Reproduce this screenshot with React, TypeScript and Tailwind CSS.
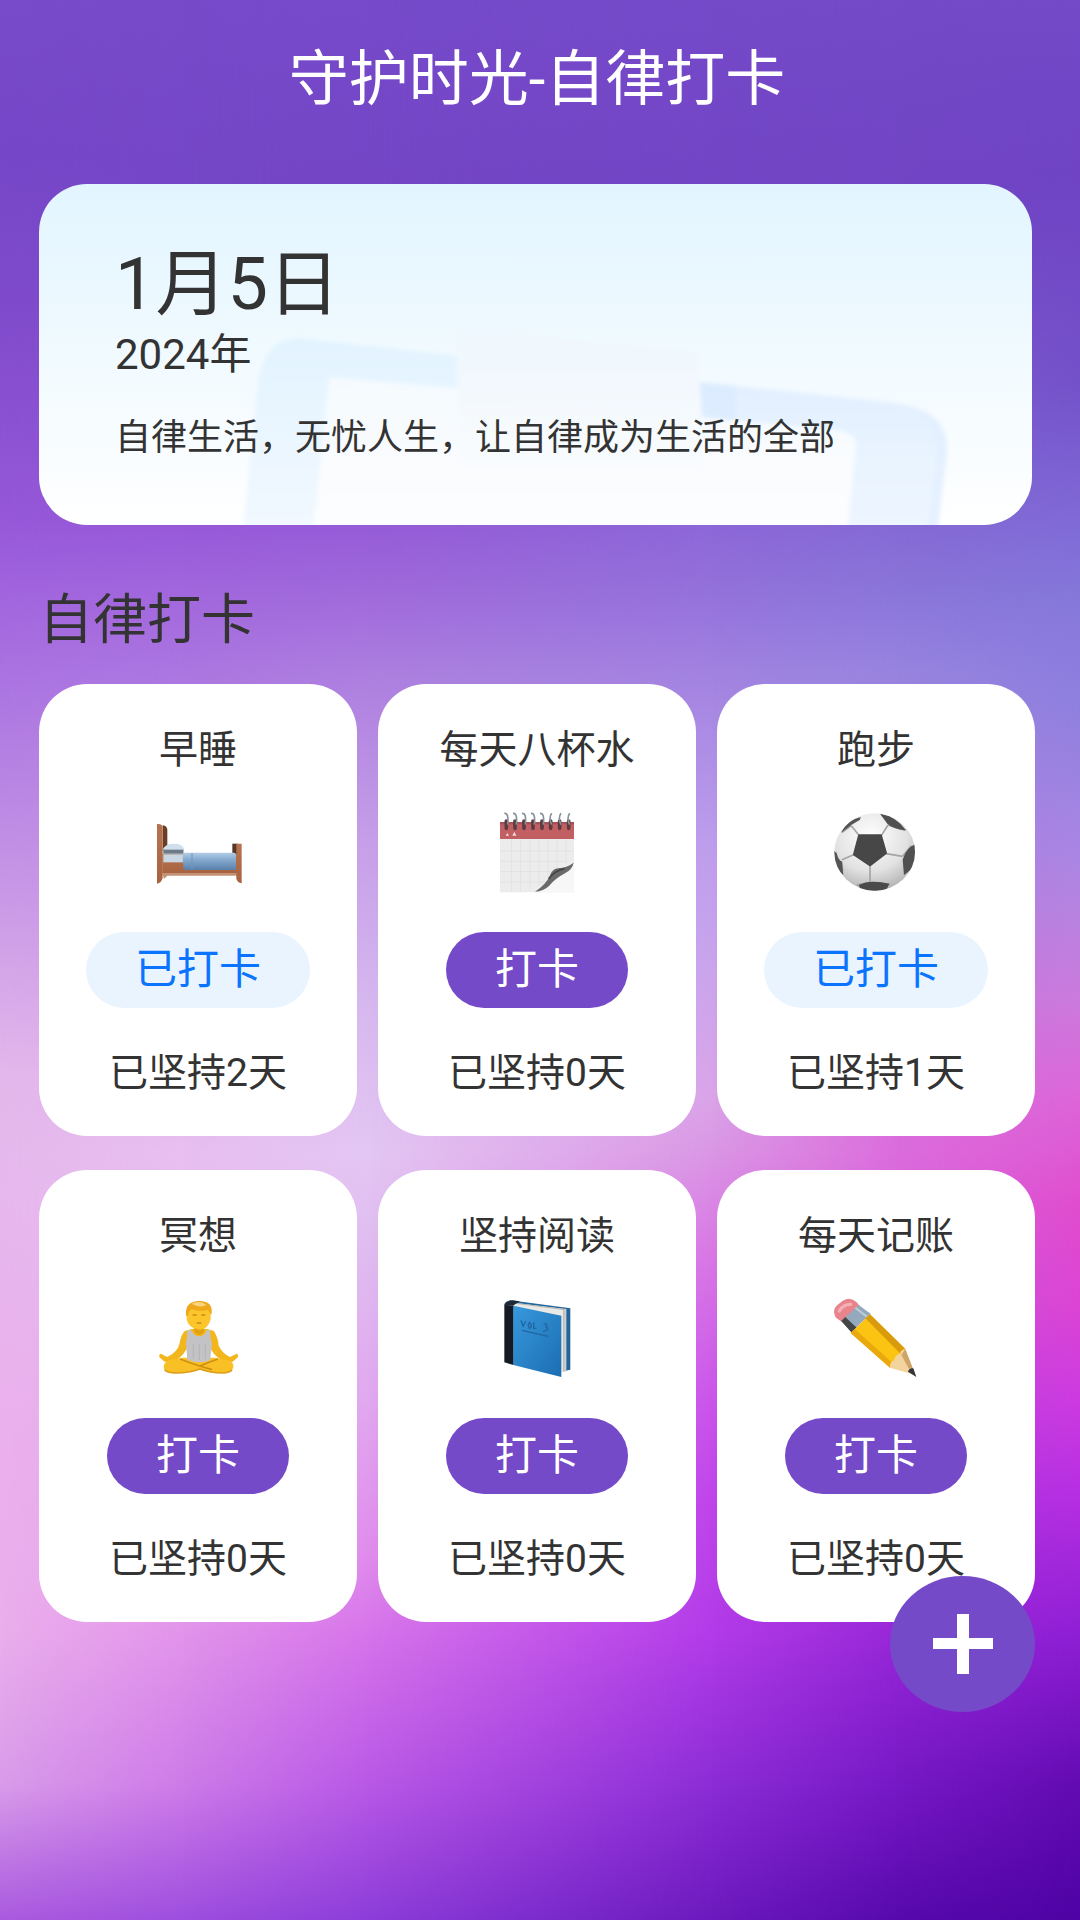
import { ReactNode, useState } from "react";
import clsx from "clsx";

// Each layer fades in over the one before it, left to right
const backdropLayers = [
  "bg-[linear-gradient(to_bottom,#784bca_0%,#7647c8_8%,#7f4bcc_16%,#9658d9_27%,#a265de_31%,#aa72e1_35%,#c290e5_44%,#d3a4e8_50%,#e4b8ec_56%,#e7b8ee_62%,#eab0ed_75%,#ebaeec_85%,#d99be9_93%,#aa5adf_100%)]",
  "bg-[linear-gradient(to_bottom,#774aca_0%,#7547c7_10%,#8a50d0_20%,#9658d8_27%,#a267dd_31%,#ab76e0_35%,#e7bfef_60%,#e6a0ec_82%,#e194ea_85%,#cd7ae8_93%,#9d4ede_100%)] [mask-image:linear-gradient(to_right,transparent_0%,black_17%)]",
  "bg-[linear-gradient(to_bottom,#764aca_0%,#7446c6_10%,#8950d0_20%,#955ad7_27%,#a06adb_31%,#ac7edf_35%,#c79fe8_44%,#d5b7ee_52%,#e4c6f3_60%,#dfbcf0_65%,#e0a8ee_73%,#e08cec_81%,#d674ea_85%,#b858e6_93%,#8c3dd9_100%)] [mask-image:linear-gradient(to_right,transparent_17%,black_34%)]",
  "bg-[linear-gradient(to_bottom,#754ac9_0%,#7245c5_10%,#7f50cc_20%,#8b66d7_27%,#9472db_31%,#a182e0_35%,#bd9dec_44%,#c8a4ec_50%,#d9a4e8_57%,#da96e4_60%,#d878e4_65%,#ca54ea_73%,#bf44ea_78%,#b23be8_85%,#8b2cd6_93%,#6b19be_100%)] [mask-image:linear-gradient(to_right,transparent_34%,black_66%)]",
  "bg-[linear-gradient(to_bottom,#744ac8_0%,#7144c4_10%,#8468d4_27%,#8a76da_31%,#9784df_35%,#dc6cdc_60%,#9c29da_84%,#7618c5_93%,#5709ad_100%)] [mask-image:linear-gradient(to_right,transparent_66%,black_83%)]",
  "bg-[linear-gradient(to_bottom,#744ac8_0%,#6f43c4_9%,#7452ca_20%,#7f6ad6_27%,#8577da_31%,#9080de_37%,#a886e4_44%,#b484e0_47%,#cb7adc_52%,#dc66d8_57%,#e04cce_63%,#db44d4_68%,#cc3ae0_73%,#b52ee2_78%,#8f1fd4_85%,#620bb2_93%,#4e02a4_100%)] [mask-image:linear-gradient(to_right,transparent_83%,black_100%)]",
];

const BedIcon = () => (
  <svg viewBox="52 50 300 276" className="h-[92px] w-[100px]" aria-hidden="true">
    <defs>
      <linearGradient id="wood" x1="0" x2="0" y1="0" y2="1">
        <stop offset="0" stopColor="#b57450" />
        <stop offset="1" stopColor="#a8623f" />
      </linearGradient>
      <linearGradient id="blanket" x1="0" x2="0" y1="0" y2="1">
        <stop offset="0" stopColor="#b3cde6" />
        <stop offset="0.4" stopColor="#86aacf" />
        <stop offset="1" stopColor="#5880ab" />
      </linearGradient>
    </defs>
    <path d="M96 105q14 2 14 14v62H96z" fill="#6b3d27" />
    <path d="M305 160h16v40h-16z" fill="#573627" />
    <path d="M95 190h225v58H95z" fill="url(#wood)" />
    <path d="M95 248h225v8H110l-10 10z" fill="#c39276" />
    <path d="M98 192h62v24H98z" fill="#c9d7e3" />
    <path d="M98 174q8-14 30-14 28 0 32 16v14H98z" fill="#cfdfeb" />
    <path d="M98 178h60v12H98z" fill="#6c7b87" />
    <path d="M157 187h152q7 0 7 8v44H160q-5-20-3-52z" fill="url(#blanket)" />
    <path d="M184 188v50" stroke="#6f95bd" strokeWidth="3" />
    <path d="M79 101q14-2 17 8v154q-4 15-17 17z" fill="url(#wood)" />
    <path d="M317 160h16v119q-14-1-16-15z" fill="url(#wood)" />
  </svg>
);

const CalendarIcon = () => (
  <svg viewBox="52 50 300 276" className="h-[92px] w-[100px]" aria-hidden="true">
    <path d="M91 140h222v166H91z" fill="#ececec" />
    <path
      d="M91 182h222M91 213h200M91 244h170M91 275h140M126 146v158M153 146v158M181 146v150M208 146v140M235 146v120M262 146v90M289 146v75"
      stroke="#e2e2e2"
      strokeWidth="3"
    />
    <path d="M196 306q35-24 48-52 24-22 69-34v86z" fill="#f7f7f7" />
    <path d="M196 304q32-20 44-46 8-24 26-24 28-3 46-17-4 20-26 32-30 16-48 38-16 16-42 17z" fill="#6a6a6a" />
    <path d="M237 265q20-25 48-30" stroke="#444" strokeWidth="5" fill="none" />
    <path d="M91 95h222v51H91z" fill="#c25f63" />
    <path d="M91 95h222v7H91z" fill="#a84f54" />
    <path d="M108 136l5-8 5 8zM128 136l6-12 6 12z" fill="#f4dcdc" />
    <path
      d="M110 92v22M136 92v22M163 92v22M190 92v22M217 92v22M243 92v22M270 92v22M297 92v22"
      stroke="#5a3c40"
      strokeWidth="11"
      strokeLinecap="round"
    />
    <path
      d="M104 69q14-2 10 34M130 69q14-2 10 34M157 69q14-2 10 34M184 69q14-2 10 34M211 69q14-2 10 34M246 69q-10 14 0 34M274 69q-10 14 0 34M300 69q-10 14 0 34"
      stroke="#87939b"
      strokeWidth="5"
      fill="none"
    />
  </svg>
);

const BallIcon = () => (
  <svg viewBox="52 50 300 276" className="h-[92px] w-[100px]" aria-hidden="true">
    <defs>
      <radialGradient id="ball" cx="0.45" cy="0.3" r="0.75">
        <stop offset="0" stopColor="#ffffff" />
        <stop offset="0.6" stopColor="#e2e2e2" />
        <stop offset="1" stopColor="#adadad" />
      </radialGradient>
      <clipPath id="ballClip">
        <ellipse cx="198" cy="185" rx="121" ry="116" />
      </clipPath>
    </defs>
    <ellipse cx="198" cy="185" rx="121" ry="116" fill="url(#ball)" />
    <g clipPath="url(#ballClip)">
      <path
        d="M152 136l-24-30M218 136l20-32M232 190l50 8M184 226v52M138 192l-38 16M128 106l-28 20M238 104l52 16M282 198l26-32M184 276l-40 8M184 276l60 6M98 212l4 30"
        stroke="#a5a5a5"
        strokeWidth="5"
        fill="none"
      />
      <path
        d="M152 136h64l15 52-47 36-47-32z"
        fill="#474747"
        stroke="#474747"
        strokeWidth="8"
        strokeLinejoin="round"
      />
      <path d="M98 126q20-38 58-46l-2 8q-28 14-54 38z" fill="#555" />
      <path d="M214 70q50 8 78 50-40-4-56-20z" fill="#505050" />
      <path d="M325 160l-17 8q-18 14-26 40l4 46 39-30z" fill="#505050" />
      <path d="M150 284q34-18 92-4l-12 26h-70z" fill="#4a4a4a" />
      <path d="M76 182l8 6q6 24 16 26l4 40q-26-20-30-60z" fill="#555" />
    </g>
  </svg>
);

const MeditateIcon = () => (
  <svg viewBox="54 38 300 276" className="h-[92px] w-[100px]" aria-hidden="true">
    <path
      d="M164 152q20-8 44-8t44 8q12 20 14 44 12 24 34 34l20-10q8 4 2 12l-14 12-24 2q-40-24-48-56h-60q-8 32-46 56l-26-2-14-12q-6-8 2-12l20 10q30-14 36-38 4-26 16-40z"
      fill="#f3b61c"
    />
    <path d="M104 268q-10-18 14-28l40-8h96l40 8q26 10 12 30-6 8-30 8-36 0-68-12-34 12-74 12-24 0-30-10z" fill="#f9c025" />
    <path d="M150 236q40 16 96 32M264 236q-30 10-56 22" stroke="#cf8f10" strokeWidth="5" fill="none" />
    <path d="M104 268q6 10 34 10 40 0 72-12 32 12 66 12 24 0 30-10" stroke="#dc9d17" strokeWidth="5" fill="none" />
    <path d="M172 150h12q8 18 24 18t22-18h10q2 30 6 40-2 22-6 50-32 12-68-2-2-24-4-48 4-18 4-40z" fill="#c3c3c6" />
    <path d="M190 190v46M208 190v50M226 190v46" stroke="#b7b7bb" strokeWidth="4" />
    <path d="M192 136h30v18q-14 20-30 0z" fill="#e2a214" />
    <path d="M170 98q2-34 38-34 34 0 34 34v18q-6 30-34 32-34-4-38-32z" fill="#fbc52b" />
    <path d="M168 106q-4-44 40-44t36 42q-6-10-10-16-24 8-50-2-8 6-10 20z" fill="#eea81a" />
    <path d="M184 70q26-12 46 4-22 10-46-4z" fill="#f8d47f" />
    <path d="M188 104h12M214 104h12M200 128h14" stroke="#c88c14" strokeWidth="4" />
  </svg>
);

const BookIcon = () => (
  <svg viewBox="52 38 300 276" className="h-[92px] w-[100px]" aria-hidden="true">
    <defs>
      <linearGradient id="cover" x1="0" x2="1" y1="0" y2="1">
        <stop offset="0" stopColor="#3799dc" />
        <stop offset="1" stopColor="#1c6db2" />
      </linearGradient>
    </defs>
    <path d="M104 72q4-10 18-12l180 24v184l-30 6z" fill="#22669d" />
    <path d="M120 66l170 20v184l-18 8-150-30z" fill="#e9e9e7" />
    <path d="M130 68l156 20v186M282 90v184" stroke="#b4b4b1" strokeWidth="3" fill="none" />
    <path d="M104 74l28 2v178l-28-8z" fill="#151a24" />
    <path d="M104 74q4-12 24-14l22 3-20 13z" fill="#222936" />
    <path d="M131 76l144 30v184l-144-36z" fill="url(#cover)" />
    <path
      d="M154 120l6 18 8-16M180 126q-8 8 0 18 10-6 0-18M192 126v18h9M222 130q14 0 7 9 14 10-9 14M156 150l80 18"
      stroke="#2066a1"
      strokeWidth="4"
      fill="none"
    />
  </svg>
);

const PencilIcon = () => (
  <svg viewBox="52 38 300 276" className="h-[92px] w-[100px]" aria-hidden="true">
    <path d="M82 112q-16-26 12-44 28-24 50-2l10 12-50 50z" fill="#e8848c" />
    <path d="M92 92q10-20 34-20" stroke="#f4b0b4" strokeWidth="10" strokeLinecap="round" fill="none" />
    <path d="M150 74l36 26-58 56-30-34z" fill="#95a9bc" />
    <path d="M98 122l12-12 34 32-16 14z" fill="#434547" />
    <path d="M140 82l36 28" stroke="#c0cedb" strokeWidth="6" />
    <path d="M184 102l106 104-46 56-118-104z" fill="#fbc412" />
    <path d="M184 102l106 104-13 16-107-108z" fill="#d99b0b" />
    <path d="M138 146l116 104-10 12-118-104z" fill="#e9a80c" />
    <path d="M290 206l30 78-76-22q-2-16 12-22 4-18 18-20 2-12 16-14z" fill="#f3d49c" />
    <path d="M290 206l24 62-14-4-22-40z" fill="#cfa468" />
    <path d="M298 274q4-12 16-10l9 26z" fill="#33363a" />
  </svg>
);

type Habit = {
  name: string;
  icon: ReactNode;
  days: number;
  done: boolean;
};

const initialHabits: Habit[] = [
  { name: "早睡", icon: <BedIcon />, days: 2, done: true },
  { name: "每天八杯水", icon: <CalendarIcon />, days: 0, done: false },
  { name: "跑步", icon: <BallIcon />, days: 1, done: true },
  { name: "冥想", icon: <MeditateIcon />, days: 0, done: false },
  { name: "坚持阅读", icon: <BookIcon />, days: 0, done: false },
  { name: "每天记账", icon: <PencilIcon />, days: 0, done: false },
];

const HabitCard = ({ habit, onCheck }: { habit: Habit; onCheck: () => void }) => (
  <li className="flex flex-col items-center rounded-[48px] bg-white pt-[42px] pb-[39px]">
    <h3 className="text-[39px] leading-[48px]">{habit.name}</h3>
    <div className="my-[33px]">{habit.icon}</div>
    <button
      onClick={onCheck}
      className={clsx(
        "h-[76px] rounded-full px-[49px] text-[42px] leading-[48px]",
        habit.done ? "bg-[#e9f4ff] text-[#0a74ff]" : "bg-[#744ac8] text-white"
      )}
    >
      {habit.done ? "已打卡" : "打卡"}
    </button>
    <p className="mt-[41px] text-[39px] leading-[48px]">已坚持{habit.days}天</p>
  </li>
);

const DateBanner = () => (
  <section className="relative mr-[3px] overflow-hidden rounded-[48px] bg-linear-to-b from-[#e2f5ff] to-white px-[76px] pt-[57px] pb-[63px]">
    <svg
      viewBox="0 0 993 341"
      preserveAspectRatio="xMidYMax slice"
      className="absolute inset-0 h-full w-full"
      aria-hidden="true"
    >
      <defs>
        <linearGradient id="leftFrame" x1="0" x2="0" y1="0" y2="1">
          <stop offset="0" stopColor="#e2f3ff" />
          <stop offset="1" stopColor="#f3f9ff" />
        </linearGradient>
        <linearGradient id="rightFrame" x1="0" x2="0" y1="0" y2="1">
          <stop offset="0" stopColor="#e2efff" />
          <stop offset="0.5" stopColor="#e9f4ff" />
          <stop offset="1" stopColor="#eef5ff" />
        </linearGradient>
        <linearGradient id="paper" x1="0" x2="0" y1="0" y2="1">
          <stop offset="0" stopColor="#f5fafe" />
          <stop offset="1" stopColor="#fefefe" />
        </linearGradient>
        <linearGradient id="clip" x1="0" x2="0" y1="0" y2="1">
          <stop offset="0" stopColor="#eff8fe" />
          <stop offset="0.4" stopColor="#f3f8fd" />
          <stop offset="1" stopColor="#fafcfe" stopOpacity="0" />
        </linearGradient>
        <filter id="soft">
          <feGaussianBlur stdDeviation="2" />
        </filter>
      </defs>
      <g filter="url(#soft)">
        <path d="M290 193L663 233 817 253 809 360H273z" fill="url(#paper)" />
        <path d="M202 360L219 199Q226 150 266 155L420 172V204L290 193 273 360z" fill="url(#leftFrame)" />
        <path d="M661 198L850 218Q910 226 908 268L897 360H807L817 262Q818 250 800 247L663 233z" fill="url(#rightFrame)" />
        <path d="M661 198l36 4v35l-34-4z" fill="#d9eaff" opacity="0.6" />
        <path d="M870 222Q910 230 908 268L897 360H887L898 268Q898 236 870 222z" fill="#dfedff" opacity="0.5" />
        <path d="M417 143L659 168 664 310H420z" fill="url(#clip)" />
      </g>
    </svg>
    <div className="relative">
      <p className="text-[72px] leading-[88px]">1月5日</p>
      <p className="text-[42px] leading-[52px]">2024年</p>
      <p className="mt-[33px] text-[36px] leading-[48px]">自律生活，无忧人生，让自律成为生活的全部</p>
    </div>
  </section>
);

export default function App() {
  const [habits, setHabits] = useState(initialHabits);

  const checkIn = (index: number) => {
    setHabits(
      habits.map((habit, i) =>
        i === index && !habit.done ? { ...habit, done: true, days: habit.days + 1 } : habit
      )
    );
  };

  return (
    <div className="relative min-h-screen font-[Roboto,'Noto_Sans_CJK_SC',sans-serif] text-[#333]">
      {backdropLayers.map((layer) => (
        <div key={layer} className={clsx("absolute inset-0", layer)} />
      ))}

      <div className="relative pr-[45px] pl-[39px]">
        <header className="pt-[44px] pb-[68px] text-center">
          <h1 className="text-[60px] leading-[72px] text-white">守护时光-自律打卡</h1>
        </header>
        <main>
          <DateBanner />
          <h2 className="mt-16 mb-[31px] text-[54px] leading-[64px]">自律打卡</h2>
          <ul className="grid grid-cols-3 gap-x-[21px] gap-y-[34px]">
            {habits.map((habit, index) => (
              <HabitCard key={habit.name} habit={habit} onCheck={() => checkIn(index)} />
            ))}
          </ul>
        </main>
      </div>

      <button
        aria-label="添加"
        className="fixed right-[45px] bottom-[208px] flex h-[136px] w-[145px] items-center justify-center rounded-[50%] bg-[#744ac8]"
      >
        <svg viewBox="0 0 60 60" className="size-[60px]" aria-hidden="true">
          <path d="M24 0h12v24h24v11H36v25H24V35H0V24h24z" fill="white" />
        </svg>
      </button>
    </div>
  );
}
